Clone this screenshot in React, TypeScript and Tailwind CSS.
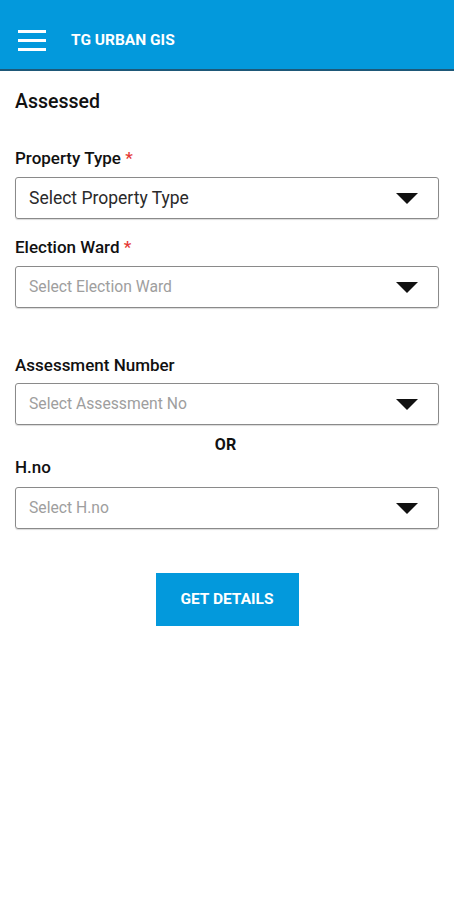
import React from "react";

function Caret() {
  return (
    <svg width="22" height="11" viewBox="0 0 22 11" className="shrink-0">
      <path d="M0 0 H22 L11 11 Z" fill="#111" />
    </svg>
  );
}

function SelectBox({ text, placeholder }: { text: string; placeholder?: boolean }) {
  return (
    <div className="flex h-[42px] items-center justify-between rounded-[3px] border border-[#8a8a8a] pl-[13px] pr-[20px] shadow-[0_1px_1px_rgba(0,0,0,0.15)]">
      <span className={placeholder ? "text-[15.7px] text-[#9e9e9e]" : "text-[17.5px] text-[#2a2a2a]"}>{text}</span>
      <Caret />
    </div>
  );
}

function Label({ text, required }: { text: string; required?: boolean }) {
  return (
    <div className="h-[22px] text-[17px] leading-[22px] font-medium text-[#111]">
      {text}
      {required && <span className="text-[#e53935]"> *</span>}
    </div>
  );
}

export default function App() {
  return (
    <div className="min-h-[900px] bg-white" style={{ fontFamily: "Roboto, 'Liberation Sans', sans-serif" }}>
      {/* Header */}
      <div className="flex h-[71px] items-center border-b-2 border-[#1e5878] bg-[#0399dc] pt-[12px]">
        <div className="ml-[18px] flex w-[28px] flex-col gap-[6px]">
          <div className="h-[3px] bg-white" />
          <div className="h-[3px] bg-white" />
          <div className="h-[3px] bg-white" />
        </div>
        <span className="ml-[25px] text-[15.5px] font-bold text-white">TG URBAN GIS</span>
      </div>

      <div className="px-[15px]">
        <div className="mt-[18px] h-[26px] text-[19.5px] leading-[26px] font-medium text-[#111]">Assessed</div>

        <div className="mt-[32px]">
          <Label text="Property Type" required />
        </div>
        <div className="mt-[8px]">
          <SelectBox text="Select Property Type" />
        </div>

        <div className="mt-[17px]">
          <Label text="Election Ward" required />
        </div>
        <div className="mt-[8px]">
          <SelectBox text="Select Election Ward" placeholder />
        </div>

        <div className="mt-[46px]">
          <Label text="Assessment Number" />
        </div>
        <div className="mt-[7px]">
          <SelectBox text="Select Assessment No" placeholder />
        </div>

        <div className="mt-[10px] h-[20px] pr-[3px] text-center text-[16px] leading-[20px] font-bold text-[#111]">OR</div>

        <div className="mt-[1px]">
          <Label text="H.no" />
        </div>
        <div className="mt-[9px]">
          <SelectBox text="Select H.no" placeholder />
        </div>

        <div className="mt-[44px] flex justify-center">
          <button className="h-[53px] w-[143px] bg-[#0399dc] text-[15.5px] font-bold text-white">GET DETAILS</button>
        </div>
      </div>
    </div>
  );
}
